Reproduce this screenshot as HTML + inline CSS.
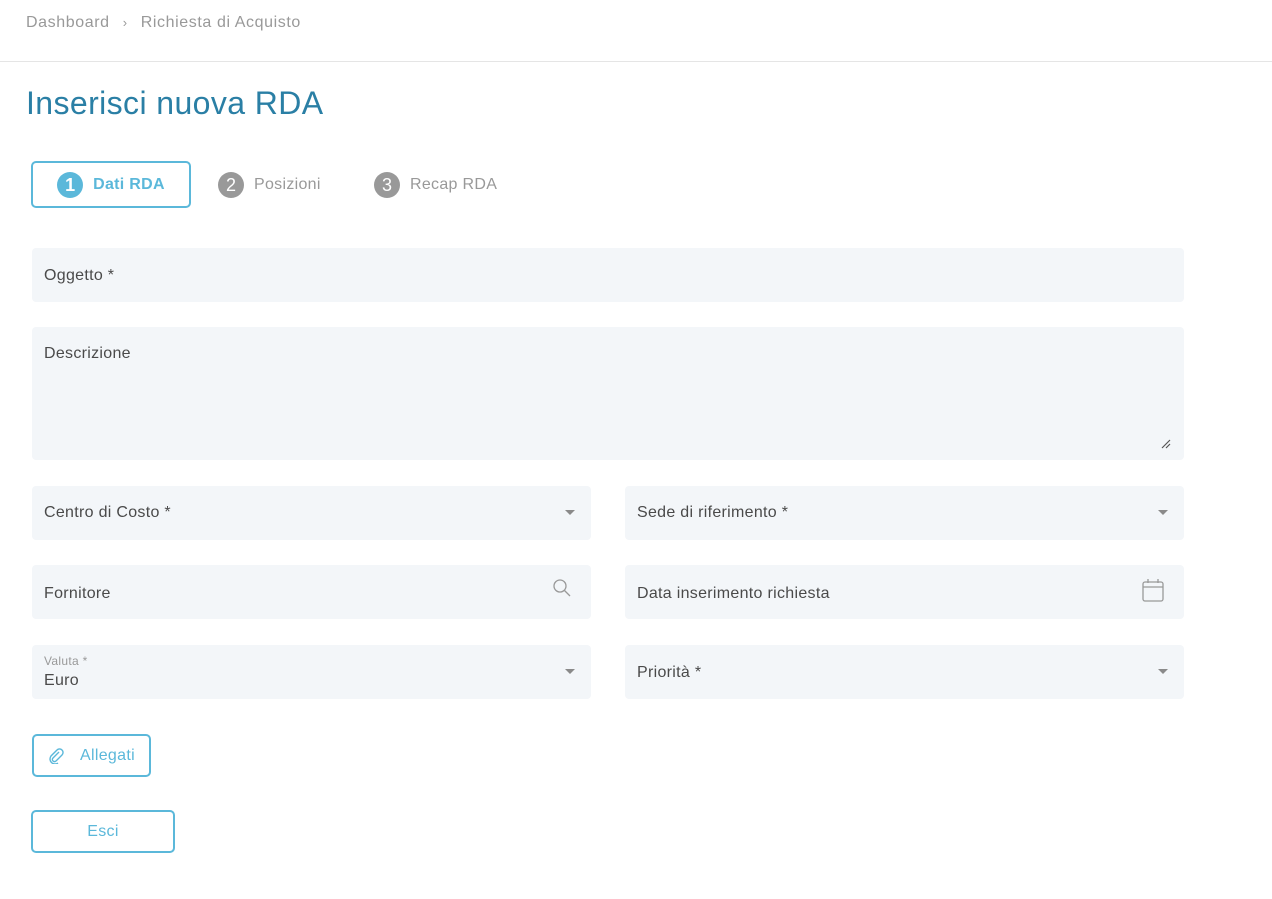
<!DOCTYPE html>
<html><head><meta charset="utf-8"><style>
body{margin:0;background:#fff;font-family:"Liberation Sans",sans-serif;width:1272px;height:899px;position:relative;overflow:hidden;color:#444;letter-spacing:0.3px}
.a{position:absolute}
.f{position:absolute;background:#f3f6f9;border-radius:4px}
.lbl{position:absolute;left:12px;font-size:16px;color:#4a4a4a}
.arr{position:absolute;right:16px;top:24px;width:0;height:0;border-left:5px solid transparent;border-right:5px solid transparent;border-top:5px solid #8a8a8a}
.btn{position:absolute;border:2px solid #5bb8da;border-radius:5px;color:#5bb8da;font-size:16px;box-sizing:border-box;display:flex;align-items:center;justify-content:center}
.c{display:inline-block;width:26px;height:26px;border-radius:13px;color:#fff;text-align:center;line-height:26px;font-size:18px;vertical-align:middle;margin-right:10px;letter-spacing:0}
</style></head><body>
<div class="a" style="left:26px;top:14px;font-size:16px;color:#999;letter-spacing:0.6px">Dashboard <span style="margin:0 8px;font-size:13px">›</span> Richiesta di Acquisto</div>
<div class="a" style="left:0;top:61px;width:1272px;height:1px;background:#e5e5e5"></div>
<div class="a" style="left:26px;top:85px;font-size:32px;color:#2a7fa5;letter-spacing:0.4px">Inserisci nuova RDA</div>
<div class="btn" style="left:31px;top:161px;width:160px;height:47px;font-weight:bold"><span class="c" style="background:#5bb8da">1</span>Dati RDA</div>
<div class="a" style="left:218px;top:172px;font-size:16px;color:#999"><span class="c" style="background:#999">2</span>Posizioni</div>
<div class="a" style="left:374px;top:172px;font-size:16px;color:#999"><span class="c" style="background:#999">3</span>Recap RDA</div>
<div class="f" style="left:32px;top:248px;width:1152px;height:54px"><div class="lbl" style="top:19px">Oggetto *</div></div>
<div class="f" style="left:32px;top:327px;width:1152px;height:133px"><div class="lbl" style="top:18px">Descrizione</div>
<svg class="a" style="right:13px;bottom:11px" width="10" height="10"><path d="M1 9L9 1M5 9L9 5" stroke="#555" stroke-width="1.2"/></svg></div>
<div class="f" style="left:32px;top:486px;width:559px;height:54px"><div class="lbl" style="top:18px">Centro di Costo *</div><div class="arr"></div></div>
<div class="f" style="left:625px;top:486px;width:559px;height:54px"><div class="lbl" style="top:18px">Sede di riferimento *</div><div class="arr"></div></div>
<div class="f" style="left:32px;top:565px;width:559px;height:54px"><div class="lbl" style="top:20px">Fornitore</div>
<svg class="a" style="right:19px;top:13px" width="20" height="20"><circle cx="8" cy="8" r="6" fill="none" stroke="#999" stroke-width="1.3"/><path d="M12.5 12.5L18 18" stroke="#999" stroke-width="1.3"/></svg></div>
<div class="f" style="left:625px;top:565px;width:559px;height:54px"><div class="lbl" style="top:20px">Data inserimento richiesta</div>
<svg class="a" style="right:19px;top:12px" width="24" height="26"><rect x="2" y="5" width="20" height="19" rx="2" fill="none" stroke="#999" stroke-width="1.3"/><path d="M2 10H22M7 2V6M17 2V6" stroke="#999" stroke-width="1.3"/></svg></div>
<div class="f" style="left:32px;top:645px;width:559px;height:54px"><div class="a" style="left:12px;top:9px;font-size:12px;color:#999">Valuta *</div><div class="lbl" style="top:27px">Euro</div><div class="arr"></div></div>
<div class="f" style="left:625px;top:645px;width:559px;height:54px"><div class="lbl" style="top:19px">Priorità *</div><div class="arr"></div></div>
<div class="btn" style="left:32px;top:734px;width:119px;height:43px"><svg width="16" height="16" style="margin-right:16px"><path d="M11 4L5 10a2 2 0 0 0 3 3l6-6a3.5 3.5 0 0 0-5-5L3 8a5 5 0 0 0 7 7" fill="none" stroke="#5bb8da" stroke-width="1.4"/></svg>Allegati</div>
<div class="btn" style="left:31px;top:810px;width:144px;height:43px">Esci</div>
</body></html>
